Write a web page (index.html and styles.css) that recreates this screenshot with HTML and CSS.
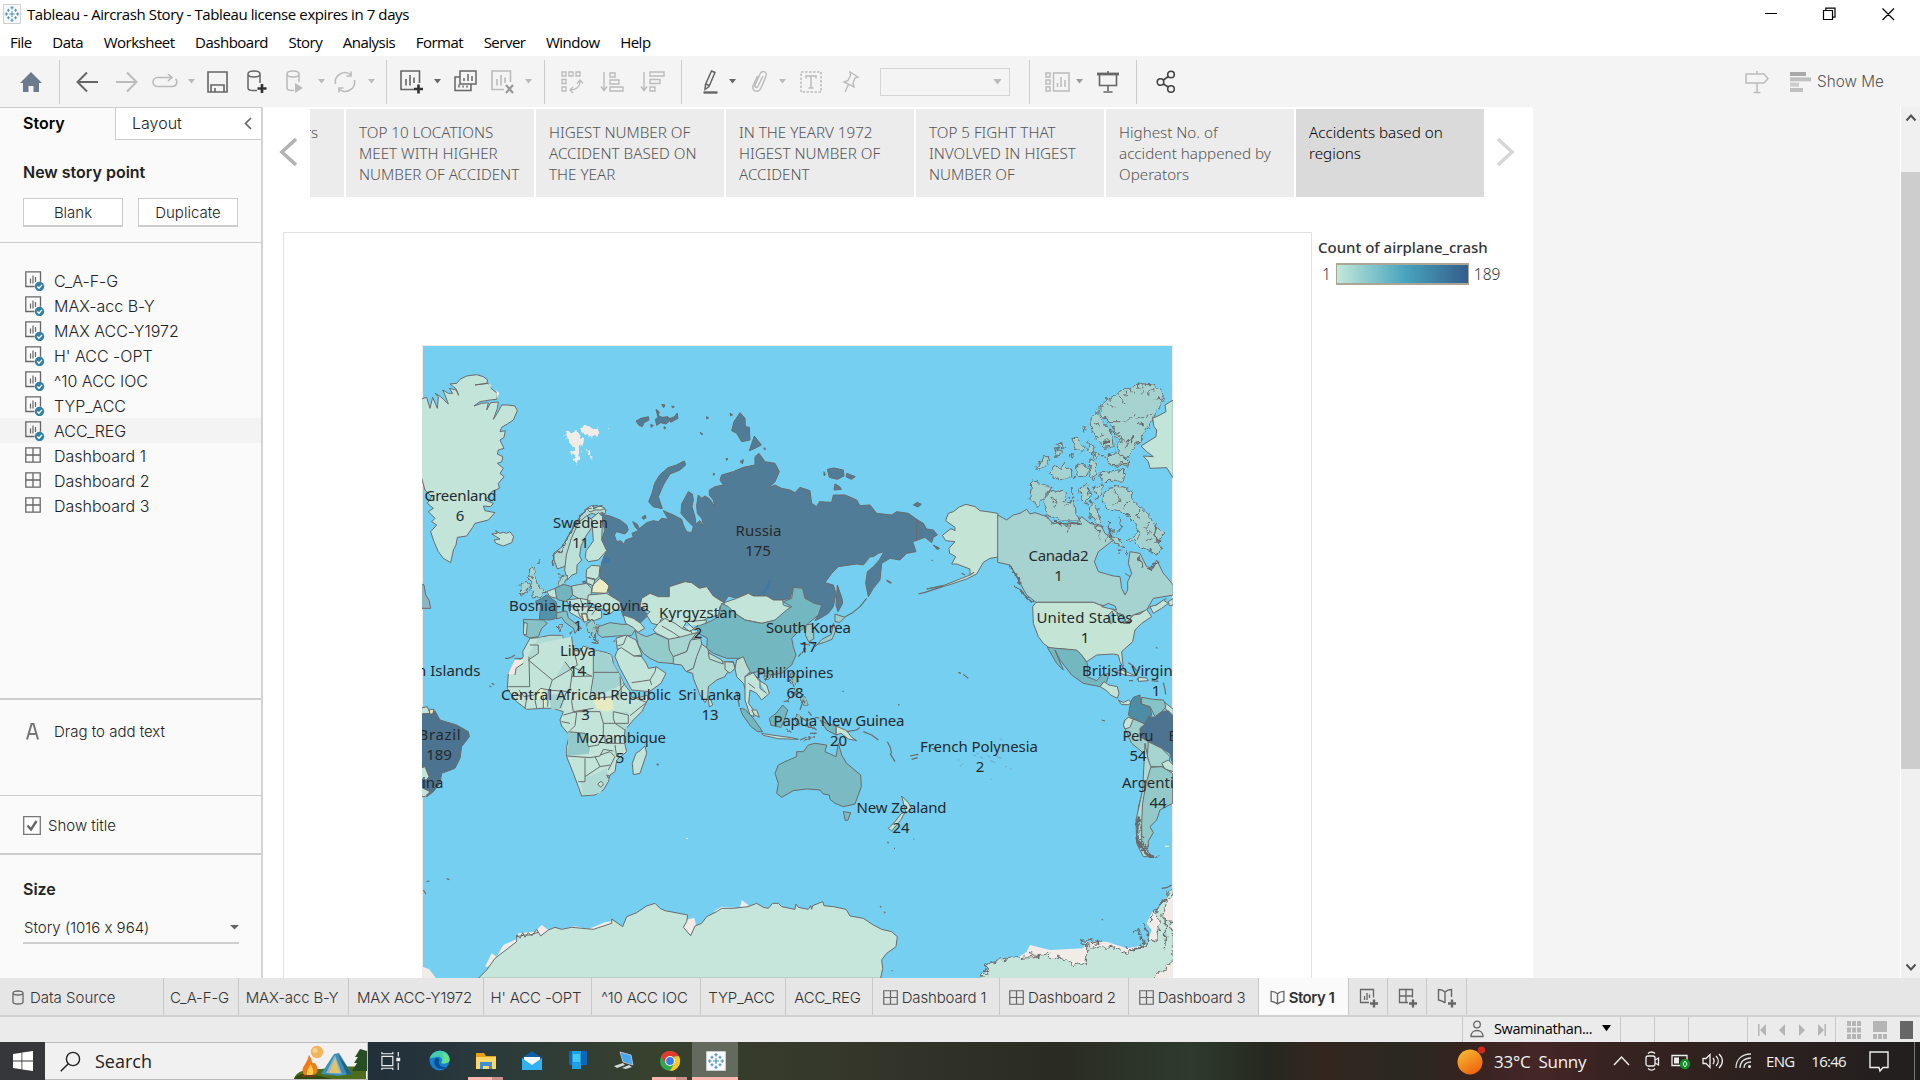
FILE: index.html
```html
<!DOCTYPE html>
<html lang="en">
<head>
<meta charset="utf-8">
<title>Tableau - Aircrash Story</title>
<link rel="stylesheet" href="styles.css">
</head>
<body>
<svg class="defs" width="0" height="0">
  <defs>
    <symbol id="sheet" viewBox="0 0 20 20"><path d="M9.500 15.500H.8V.8h14.700v10" fill="none" stroke="#666" stroke-width="1.300"/><path d="M5.500 12.500V7.500M8 12.500V4.500M10.500 11V6" stroke="#666" stroke-width="1.200"/><circle cx="14.500" cy="15.500" r="4.700" fill="#3380a3"/><path d="M12.300 15.500l1.700 1.700 3-3.300" fill="none" stroke="#fff" stroke-width="1.400"/></symbol>
    <symbol id="dash" viewBox="0 0 16 16"><path d="M.8.8h14.400v14.400H.8zM8 .8v14.400M.8 8h14.400" fill="none" stroke="#666" stroke-width="1.300"/></symbol>
    <symbol id="book" viewBox="0 0 16 16"><path d="M8 4C6 2 4 1.500 1.200 1.500v10.500C4 12.500 6 13 8 15c2-2 4-2.500 6.800-3V1.500C12 1.500 10 2 8 4zM8 4v11" fill="none" stroke="#666" stroke-width="1.400"/></symbol>
    <symbol id="caret" viewBox="0 0 7 5"><path d="M0 0h7L3.500 4.500z" fill="currentColor"/></symbol>
    <symbol id="tableau" viewBox="0 0 20 20"><path d="M.5.5h19v19H.5z" fill="#f7f8f9" stroke="#c9cdd1"/><path d="M10 7v6M7 10h6M10 2v3.500M8.300 3.700h3.400M10 14.500V18M8.300 16.300h3.400M2 10h3.500M3.700 8.300v3.400M14.500 10H18M16.300 8.300v3.400M6 4.700v3M4.500 6.200h3M14 4.700v3M12.500 6.200h3M6 12.300v3M4.500 13.800h3M14 12.300v3M12.500 13.800h3" stroke="#4a8fb5" stroke-width="1.100"/></symbol>
    <filter id="fjord" x="-5%" y="-5%" width="110%" height="110%"><feTurbulence type="fractalNoise" baseFrequency=".055" numOctaves="2" seed="4" result="n"/><feDisplacementMap in="SourceGraphic" in2="n" scale="26" xChannelSelector="R" yChannelSelector="G"/></filter>
  </defs>
</svg>

<header class="titlebar">
  <svg class="app-icon" width="18" height="20" viewBox="0 0 20 20" preserveAspectRatio="none"><use href="#tableau"/></svg>
  <span class="win-title">Tableau - Aircrash Story - Tableau license expires in 7 days</span>
  <svg class="win-buttons" width="132" height="16" viewBox="0 0 132 16" fill="none" stroke="#000" stroke-width="1.200"><path d="M0 7.500h12M58.500 4.500h9v9h-9zM60.800 4.500V2.200h9.200v9h-2.500M117.500 2.500l11.500 11.500M129 2.500l-11.500 11.500"/></svg>
</header>

<nav class="menubar">
  <span>File</span><span>Data</span><span>Worksheet</span><span>Dashboard</span><span>Story</span><span>Analysis</span><span>Format</span><span>Server</span><span>Window</span><span>Help</span>
</nav>

<div class="toolbar">
  <svg width="22" height="22" viewBox="0 0 22 22"><path d="M11 1L0 12h3v9h5.500v-6h5v6H19v-9h3z" fill="#6b7a8c"/></svg>
  <i class="sep"></i>
  <svg width="22" height="22" viewBox="0 0 22 22"><path d="M22 11H2M11 1.500L1.500 11l9.500 9.500" fill="none" stroke="#666" stroke-width="2"/></svg>
  <svg class="off" width="22" height="22" viewBox="0 0 22 22"><path d="M0 11h20M11 1.500l9.500 9.500L11 20.500" fill="none" stroke="currentColor" stroke-width="2"/></svg>
  <svg class="off" width="26" height="22" viewBox="0 0 26 22"><path d="M19 6.500H5.500a4.500 4.500 0 000 9h15a4.500 4.500 0 003-7.700M16 3l4 3.500-4 3.500" fill="none" stroke="currentColor" stroke-width="1.600"/></svg>
  <svg class="off" width="7" height="5"><use href="#caret"/></svg>
  <svg width="21" height="22" viewBox="0 0 21 22"><path d="M1 1h19v20H1zM4 21v-7h13v7M8 21v-4" fill="none" stroke="#666" stroke-width="1.600"/></svg>
  <svg width="20" height="24" viewBox="0 0 20 24"><path d="M10 20.500H6c-3 0-5-1-5-2.500V4c0-1.700 2.500-3 6-3s6 1.300 6 3v9M1 4c0 1.700 2.500 3 6 3s6-1.300 6-3" fill="none" stroke="#666" stroke-width="1.500"/><path d="M15 14v9M10.500 18.500h9" stroke="#333" stroke-width="2.600"/></svg>
  <svg class="off" width="18" height="24" viewBox="0 0 18 24"><path d="M8 20.500H6c-3 0-5-1-5-2.500V4c0-1.700 2.500-3 6-3s6 1.300 6 3v8M1 4c0 1.700 2.500 3 6 3s6-1.300 6-3" fill="none" stroke="currentColor" stroke-width="1.500"/><path d="M9 13l8 5-8 5z" fill="currentColor"/></svg>
  <svg class="off" width="7" height="5"><use href="#caret"/></svg>
  <svg class="off" width="22" height="22" viewBox="0 0 22 22"><path d="M1.500 13A9.500 9.500 0 0117 4M20.500 9A9.500 9.500 0 015 18M17 .5V5h-4.500M5 21.500V17h4.500" fill="none" stroke="currentColor" stroke-width="1.600"/></svg>
  <svg class="off" width="7" height="5"><use href="#caret"/></svg>
  <i class="sep"></i>
  <svg width="24" height="24" viewBox="0 0 24 24"><path d="M14 19.500H1V1h18.500v12" fill="none" stroke="#666" stroke-width="1.600"/><path d="M6 15.500V9M10 15.500V5M14 13V7.500" stroke="#666" stroke-width="1.600"/><path d="M18.500 14.500v9M14 19h9" stroke="#333" stroke-width="2.600"/></svg>
  <svg width="7" height="5"><use href="#caret"/></svg>
  <svg width="23" height="24" viewBox="0 0 23 24"><path d="M6 1h16v13H6zM6 7H1v13.500h16V14M10 11V8M14 11V4M18 11V6M5 17.500v-3M9 17.500v-2M13 17.500v-2" fill="none" stroke="#666" stroke-width="1.500"/></svg>
  <svg class="off" width="24" height="24" viewBox="0 0 24 24"><path d="M13 19.500H1V1h18.500v11" fill="none" stroke="currentColor" stroke-width="1.600"/><path d="M6 15.500V9M10 15.500V5M14 13V7.500" stroke="currentColor" stroke-width="1.600"/><path d="M15 15l7 8M22 15l-7 8" stroke="#999" stroke-width="2.200"/></svg>
  <svg class="off" width="7" height="5"><use href="#caret"/></svg>
  <i class="sep"></i>
  <svg class="off" width="22" height="22" viewBox="0 0 22 22" fill="none" stroke="currentColor" stroke-width="1.300"><path d="M1 1h4v4H1zM8 1h4v4H8zM15 1h4v4h-4zM1 8.500h4v4H1zM1 16h4v4H1zM9 19c6 0 10-3 10-9M16 12.500l3-3.500 3 3.500M12 16l-3 3 3 3"/></svg>
  <svg class="off" width="23" height="22" viewBox="0 0 23 22" fill="none" stroke="currentColor" stroke-width="1.400"><path d="M3 1v17M0 15.500l3 4 3-4M9 2h5v4H9zM9 9h9v4H9zM9 16h13v4H9z"/></svg>
  <svg class="off" width="24" height="22" viewBox="0 0 24 22" fill="none" stroke="currentColor" stroke-width="1.400"><path d="M3 1v17M0 15.500l3 4 3-4M9 1h14v4H9zM9 8.500h10v4H9zM9 16h5v4H9z"/></svg>
  <i class="sep"></i>
  <svg width="18" height="24" viewBox="0 0 18 24" fill="none" stroke="#666"><path d="M9.500 1l3.500 1.500-6 14-4 3 .5-5zM4 14l4 2" stroke-width="1.500"/><path d="M1.500 22.500h14" stroke-width="2.400"/></svg>
  <svg width="7" height="5"><use href="#caret"/></svg>
  <svg class="off" width="18" height="23" viewBox="0 0 18 23" fill="none" stroke="currentColor" stroke-width="1.400"><path d="M12 6l-5 10c-1 2.500-4 1.500-3-1L9 4c1.500-4 7.500-3 6 2L10 18c-2 5-9.500 4-8-2L6.500 6"/></svg>
  <svg class="off" width="7" height="5"><use href="#caret"/></svg>
  <svg class="off" width="22" height="22" viewBox="0 0 22 22" fill="none" stroke="currentColor"><path d="M1 1h20v20H1z" stroke-width="1.500" stroke-dasharray="2.500 1.500"/><path d="M6 7.500V5h10v2.500M11 5v12M8.500 17h5" stroke-width="1.500"/></svg>
  <svg class="off" width="17" height="22" viewBox="0 0 17 22" fill="none" stroke="currentColor" stroke-width="1.400"><path d="M8 1l8 5-3 1-2 5 1 4-10-5 4-1.500 2.500-5zM6.500 13.500L3 21"/></svg>
  <span class="fit-select"><svg class="off" width="9" height="6" viewBox="0 0 7 5"><use href="#caret"/></svg></span>
  <i class="sep"></i>
  <svg class="off" width="25" height="22" viewBox="0 0 25 22" fill="none" stroke="currentColor" stroke-width="1.500"><path d="M1 2h4v4H1zM1 9h4v4H1zM1 16h4v4H1zM8.500 2H24v18H8.500zM12.500 16v-4M16 16V6M20 16V9"/></svg>
  <svg class="off2" width="7" height="5"><use href="#caret"/></svg>
  <svg width="22" height="24" viewBox="0 0 22 24" fill="none" stroke="#666"><path d="M0 4h22" stroke-width="2.800"/><path d="M2.500 4v11.500h17V4M11 1v2M11 16v5M6.500 22h9" stroke-width="1.600"/></svg>
  <i class="sep"></i>
  <svg width="20" height="24" viewBox="0 0 20 24" fill="none" stroke="#444" stroke-width="1.600"><circle cx="4.500" cy="12" r="3.300"/><circle cx="15" cy="4.500" r="3.300"/><circle cx="15" cy="19" r="3.300"/><path d="M7.300 10l5-3.500M7.300 14l5 3"/></svg>
  <svg class="off" width="24" height="24" viewBox="0 0 24 24" fill="none" stroke="currentColor" stroke-width="1.500"><path d="M1 4h18l4 4.500-4 4.500H1zM12 1v3M12 13v9M8.500 22.500h7"/></svg>
  <svg width="21" height="20" viewBox="0 0 21 20"><path d="M0 0h16v4H0z" fill="#aaa"/><path d="M0 5.300h21v4H0z" fill="#c0c0c0"/><path d="M0 10.600h9v4H0z" fill="#ccc"/><path d="M0 16h13v4H0z" fill="#c0c0c0"/></svg>
  <span class="show-me">Show Me</span>
</div>

<main class="workspace">
  <aside class="pane">
    <div class="pane-tabs"><b>Story</b><span>Layout<svg width="8" height="13" viewBox="0 0 8 13"><path d="M7 1L1.500 6.500 7 12" fill="none" stroke="#666" stroke-width="1.700"/></svg></span></div>
    <section class="new-point"><h2>New story point</h2><div class="btns"><button>Blank</button><button>Duplicate</button></div></section>
    <ul class="sheets">
      <li><svg width="20" height="20"><use href="#sheet"/></svg>C_A-F-G</li>
      <li><svg width="20" height="20"><use href="#sheet"/></svg>MAX-acc B-Y</li>
      <li><svg width="20" height="20"><use href="#sheet"/></svg>MAX ACC-Y1972</li>
      <li><svg width="20" height="20"><use href="#sheet"/></svg>H' ACC -OPT</li>
      <li><svg width="20" height="20"><use href="#sheet"/></svg>^10 ACC IOC</li>
      <li><svg width="20" height="20"><use href="#sheet"/></svg>TYP_ACC</li>
      <li class="hover"><svg width="20" height="20"><use href="#sheet"/></svg>ACC_REG</li>
      <li><svg class="d" width="16" height="16"><use href="#dash"/></svg>Dashboard 1</li>
      <li><svg class="d" width="16" height="16"><use href="#dash"/></svg>Dashboard 2</li>
      <li><svg class="d" width="16" height="16"><use href="#dash"/></svg>Dashboard 3</li>
    </ul>
    <section class="drag"><svg width="13" height="17" viewBox="0 0 13 17"><path d="M1 16.500L5.500 1h2L12 16.500M3 11h7" fill="none" stroke="#777" stroke-width="2"/></svg>Drag to add text</section>
    <section class="title-opt"><svg width="18" height="19" viewBox="0 0 18 19"><path d="M.7.700h16.600v17.600H.7z" fill="#fff" stroke="#777" stroke-width="1.300"/><path d="M4.500 9.500L8 13.500 13.500 5" fill="none" stroke="#666" stroke-width="2.400"/></svg>Show title</section>
    <section class="size"><h2>Size</h2><div class="size-select">Story (1016 x 964)<svg width="9" height="5" viewBox="0 0 7 5" preserveAspectRatio="none"><use href="#caret"/></svg></div></section>
  </aside>

  <div class="story">
    <div class="navigator">
      <svg class="arrow" width="47" height="30" viewBox="0 0 47 30"><path d="M33 2L19 15l14 13" fill="none" stroke="#b3b3b3" stroke-width="3.600"/></svg>
      <div class="points">
        <div class="point cut">rs</div>
        <div class="point">TOP 10 LOCATIONS<br>MEET WITH HIGHER<br>NUMBER OF ACCIDENT</div>
        <div class="point">HIGEST NUMBER OF<br>ACCIDENT BASED ON<br>THE YEAR</div>
        <div class="point">IN THE YEARV 1972<br>HIGEST NUMBER OF<br>ACCIDENT</div>
        <div class="point">TOP 5 FIGHT THAT<br>INVOLVED IN HIGEST<br>NUMBER OF</div>
        <div class="point">Highest No. of<br>accident happened by<br>Operators</div>
        <div class="point current">Accidents based on<br>regions</div>
      </div>
      <svg class="arrow" width="47" height="30" viewBox="0 0 47 30"><path d="M14 2l14 13-14 13" fill="none" stroke="#d6d6d6" stroke-width="3.600"/></svg>
    </div>
    <div class="view">
      <div class="frame">
        <svg class="map" width="751" height="633" viewBox="422 345 751 633">
          <path d="M422 345h751v633H422z" fill="#f1ece6"/>
          <path d="M423 346h749v632H423z" fill="#74cff1"/>

          <!-- north-west sheet of the map -->
          <g class="land" transform="translate(420 340) scale(.33333)">
            <path d="M0 178L20 172 30 205 38 172 52 205 55 170 45 160 62 170 85 192 75 165 68 150 85 160 98 160 88 145 108 150 116 166 108 146 90 132 110 130 120 118 140 108 170 104 190 110 203 120 200 130 165 135 205 130 213 145 232 160 230 178 210 180 180 185 162 198 185 190 205 188 200 210 212 188 235 186 232 205 220 238 232 220 245 195 262 195 285 198 292 212 280 240 262 252 245 262 240 275 256 272 252 292 240 300 252 325 235 330 232 342 248 350 246 365 232 370 250 385 240 400 252 410 235 430 238 445 215 455 205 470 195 480 220 490 212 500 190 498 195 512 225 518 205 540 165 550 158 562 140 588 112 592 108 615 100 630 92 668 70 655 55 635 42 605 32 575 50 555 35 545 45 535 25 515 40 505 22 490 35 470 15 450 5 415 0 400z"/>
            <path d="M215 582l17-2-5-8 12 8 12-3 8 3 11-5 11 15-6 18-25 10-22-8-6-10 18-3z"/>
            <path d="M0 730l12 5 5 30 10 15 5 25-32 0z" fill="#8fb5c4"/>
            <path filter="url(#fjord)" class="bare" d="M435 278l20 2 13-8 12 13 12 20-12 25-2 20-10 23-8-23-8-8 10-17-18-15zM484 258l11-2 15 6 22 3-2 20-15 8-15-8-14-10zM497 318l18 27-5 5-10-15zM568 261h4v3h-4z"/>
            <path class="bare" d="M205 130l8 5-2 10zM230 150l8 10-8 18z"/>
            <g class="rus">
              <path d="M960 218l15 17 1 25 12 2 2 38-25 5-15-25-15-8 7-27zM1003 288l21 27-19 10-17 7zM793 363l4 12-17 15-30 12-20 33-15 35 12 36-28-6-13-15 10-25 8-30 15-25 25-22 25-8zM648 243l15-8 22-5 2 10-15 8-5 12-10-4zM708 208l10 8-4 10 12 6 18-2 8 10-14 12-16-4-12 8-4-18 8-6zM750 235l12-4 10-12 2 16-22 12zM725 193l10 2-4 8zM755 198l8 2-5 4zM692 254l8 2-6 6zM732 260l6 4-5 3zM860 230l6 4-6 3zM840 277l8 5-2 3zM930 220l8 4-6 4zM1032 323l5 4-4 2zM666 532l10-6 2 8-8 4zM488 725l14-3 8 10-18 2zM960 365l10-6-2 12zM880 400l5 2-5 4zM918 355l6 2-4 4z"/>
              <path d="M1222 388l20-4 28 6 2 18-20 10-24-6zM1280 400l26 10-12 8-16-8zM1245 432l14 8 5 8-22 2zM1480 495l12-8 12 6-10 8zM1540 615l18 10-6 4zM1400 720l14 8-4 2zM1212 395l4 10-4 2z"/>
              <path d="M545 520L555 525 570 528 600 540 620 555 625 570 615 582 590 575 583 585 590 605 602 602 612 613 617 600 640 592 636 580 655 572 645 560 638 545 652 553 658 566 680 548 700 542 715 545 725 535 745 538 730 512 760 525 785 538 790 555 800 575 815 578 820 560 800 540 783 520 785 492 805 455 817 462 820 480 816 500 825 530 828 552 840 542 852 560 845 535 832 520 830 495 835 465 845 475 855 468 870 478 885 500 880 480 868 465 868 450 885 440 910 435 900 420 905 405 940 395 970 382 1005 375 1005 350 1017 340 1035 365 1065 370 1078 395 1065 425 1045 445 1065 435 1085 445 1110 450 1125 458 1140 442 1170 452 1175 490 1190 500 1198 485 1235 487 1240 465 1275 465 1310 480 1320 497 1350 495 1370 520 1415 525 1430 515 1465 520 1490 538 1510 550 1520 567 1540 570 1552 585 1540 592 1535 608 1515 592 1493 600 1478 605 1488 635 1460 640 1440 660 1410 655 1385 670 1380 720 1360 745 1345 770 1337 730 1342 695 1360 680 1378 660 1392 635 1375 640 1360 650 1350 650 1330 675 1310 672 1255 680 1235 700 1215 728 1240 735 1248 760 1240 800 1225 820 1200 835 1185 842 1195 825 1205 795 1183 790 1155 775 1148 745 1120 742 1110 775 1088 780 1060 780 1040 768 1000 768 985 760 950 775 925 768 912 788 880 768 860 740 838 745 815 728 795 725 748 740 748 770 715 770 690 760 665 775 660 800 685 825 660 850 640 835 610 830 600 800 580 780 565 755 565 735 538 710 545 665 560 632 545 600 555 570 545 545zM1252 735l14 40 2 15-14 25-6-20z"/>
            </g>
            <path d="M1052 720l-3 20-18 22-15 3 20-20 10-25z" fill="#3d78a8" stroke="none"/><path d="M550 650l20 5-2 15-16-3z" fill="#3d78a8" stroke="none"/>
            <path d="M1490 537v65"/>
            <path fill="#b3dad5" d="M540 500l18 10-3 12-10-5-12 8-18-5-15 8-15 22-18 40-14 32-5 35-14 22-22 8-10-28 0-20 24-18 25-45 25-40 25-30z"/>
            <path fill="#bce1d8" d="M500 528l15 10 0 25-17 25-15 30-4 30 6 12-14 15-1 25-14 5-14 15-8-30 5-45 15-50 22-48z"/>
            <path d="M515 535l20-17 13 12-3 70 15 32-25 28-30 5-9-12 2-20 22-30-2-30z"/>
            <path d="M500 505l15-8 10 8 15-8 15 8-12 5-18 0-15 6z"/>
            <path filter="url(#fjord)" stroke-width="5" d="M398 675l5-25 22-20 22-42 22-42 18-25 20-18 22-6 25 5"/>
            <path filter="url(#fjord)" d="M330 690l10-8 10 3-8 15 3 12 17 33 13 10-7 13-33 7-5-6 13-10-6-12-10-5 5-15zM303 735l12-8 10 3 0 25-20 8zM350 668l8-12 2 6zM322 705l8-15 4 20-8 6zM418 715l8-15 10 8-2 22-10 8-8-10z" fill="#a9d5d1"/>
            <path fill="#5193a8" d="M345 785l20-10 15-10 30 22 0 48-20 5-32-2 4-43z"/>
            <path fill="#73b5bf" d="M405 745l25-12 25 7 3 25-18 20-25-5-10-15z"/>
            <path fill="#b3dad5" d="M455 738l45-8 15 15-3 35-28 0-26-15z"/>
            <path fill="#e8edc4" d="M518 735l22-20 12 8 15 15-7 22-45-2z"/>
            <path d="M505 765l55-5 40 25 5 25-20 0-15 12-15-10-15-8-38-20zM500 688l15-12 25 2-3 32-12 10-27-8zM500 712l25 5-5 20-20-8zM380 755l25-10 5 30-20-5zM440 780l40-5 25 5-5 20-30 0-25-8zM445 800l60 0 25 5 15 8 0 20-25 10-35-5-35-20z"/>
            <path d="M480 775l10 25M510 780l-8 40M470 800l10 30 30 10M530 805l-15 20"/>
            <path fill="#85c1c5" d="M310 838l60 2 12 10-17 15-10 25-25 4-18-9zM410 818l30-5 5 20 40 32-12 3-8 12-5-15-25-18-10-15-15 5z"/>
            <path d="M312 848l10 2-3 35-9-2zM484 820l16 0 5 20-15 5z"/><path fill="#e8edc4" d="M485 822l14 0 4 20-10 5z"/>
            <path filter="url(#fjord)" d="M500 850l22-8 10 15-8 10 10 8-10 12 6 15-18-12-10-25zM415 855l8-2 2 18-8 2zM445 880l15-2-3 8zM518 908l15-2-6 5zM575 902l12-5-5 8zM508 878l6 8-6 4zM524 888l8 6-4 6z" fill="#93c9ca"/>
            <path fill="#8fc8c8" d="M535 860l35-12 35 5 30 0 12 15-12 18-45 2-45 4-12-10z"/>
            <path d="M610 825l30 10 22 15 12 15-20 12-15-15-22-12z"/>
            <path d="M665 775l25-15 25 10 33 0 0-30 47-15 20 3 23 17 22-5 20 28 32 20-12 12-5 25-35 10-20 15-40-5-15 25-35-25-25-10-10 20-20-5-15-25 10-10-30-15z"/>
            <path d="M715 850l20-15 30 15 25 18 25 7 20 5-10 15-30-5-10 10-35 0-40-20-10-10z"/><path d="M725 858l35 20 25 18M790 860l20 15 25-20M800 845l60-5-5 20-30 10zM810 870l10 15 15-10"/>
            <path fill="#93caca" d="M645 872l15 10 20 8 25-10 40 18 15 32 15 42-60-5-25-12-20-15-15-25z"/>
            <path fill="#a6d4d1" d="M745 898l40-8 45-12-20 27-10 30-40 15-12-20z"/>
            <path fill="#b0dad4" d="M760 950l40-15 12-35 30-5 5 25-15 30-12 35-22 10-13-20-25-3z"/>
            <path d="M912 788l38-13 35-15 15 8 40 0 20 12 28 0 2 15 23 8-18 17-35 25-35 5-50-10-30-20-30-20z"/>
            <path fill="#73b7c0" d="M1120 742l28 3 7 30 28 15 22 5-10 30-30 25-20 20-15 10-15 15 5 25 8 25-13 30-30 25-35 5-35-10-30 5-10-25-15-20-40 0-40-15-20-15 2-30-27-15-5-20 40-15 25-15 10-40 20 10 20 20 30 20 50 10 40-10 35-30 15-10-25-15 25-10z"/>
            <path fill="#b0dad4" d="M845 912l17 13 8 20 40 20 30 0 5 20-25 15-5 10-25 10-25 20-2 35-8 13-15-23-20-50-2-15-18-5 20-10 10-35z"/>
            <path d="M865 938l40 22 5 12-42-15zM915 965l25 2 5 18-15 15-15-12zM950 960l20-10 10 25 10 20-15 15 12 40-5 15-12-35-20-20-5-25z" fill="#b9ded6"/>
            <path d="M975 1010l25-12 15 22 25 15 8 25-23 20-15-20-20-10-2 20-2 20 14 20 2 20-12-5-15-45zM1000 1000l20 20 0 25 20 15M985 1030l20 15"/>
          </g>

          <!-- Africa, Arabia and Brazil's western copy -->
          <g class="land" transform="translate(420 640) scale(.33333)">
            <path d="M330-5L355-7 390-14 428-14 430 8 445 15 460 32 482 33 490 18 522 30 560 38 575 45 580 72 600 105 612 132 630 155 636 172 660 172 683 165 683 180 665 215 640 240 615 270 612 300 620 335 590 360 585 395 570 405 565 425 550 450 525 465 485 468 475 440 460 400 440 350 440 320 448 285 425 258 420 240 430 215 415 210 395 205 370 205 320 208 290 185 275 165 262 145 265 100 285 72 310 50 308 35z"/>
            <g stroke="none">
              <path fill="#f3e8e2" d="M264 102l20-42 25 0-2 12-15 8-5 22z"/>
              <path fill="#a3d3d0" d="M522 30l53 15-5 10 25 42-75 0zM520 97l75 0 15 30-10 45-40 0-45 0zM385 165l55-5-15 45-30 5z"/>
              <path fill="#b0dad4" d="M355-7l72-6 8 80 20 20-58 32-72-62 0-12zM580 215l45 0-5 55-35-20zM480 420l50-20 30-15 5 35-25 40-50 5z"/>
              <path fill="#e6ebc0" d="M518 178l57-6 6 35-20 8-30-8zM340 158l25-15 15 25-30 12zM368 180l8 0 2 18-8 2z"/>
              <path fill="#93cac9" d="M443 275l52 5 15 40-5 32-64-5 4-30z"/>
            </g>
            <path d="M308 55h-25M327 50l2 90-64 0M310 70l-22 15-3 20M330 15l25 0 0 25-30 20 72 60 60-35 15-10-15-65-2-20M397 120l-10 30-25-5-20 20-30 5-15-20M457 80l60 30M520 30v80l-10 60M520 97h75M435 65l22 30-8 60-65-5M440 155l-20 50M385 150l-2 50M370 170l0 35M345 180l5 25M320 175l-5 30M285 160l20 10M455 110l60-2M460 155l-5 30 5 30 60-10M520 175l60-5 20-20 15-20M580 215l45 10 0 25-40 0-5-15zM640 172l40 15-50 40M430 225l30-8 10 0-5 40-15 15M425 245l25 5M470 215l70 0 10 35 0 35-15 30-30 5-10-40-50-5M550 250l35 0 30 20M555 285l0 25 60 0M440 348l70 5 30-5 10-20 30 5M495 355l0 70-20 0M525 350l15 30-45 30M540 380l30-5M540 345l30-10 15 15-20 40M585 315l5 35M600 110l5 60"/>
            <path d="M533 432l10-8 8 8-9 10zM560 405l8 2-3 8z"/>
            <path d="M675 318l5 22-20 60-20 4-3-34 11-30 12-8zM865 178l8 2 5 15-10 6zM711 372h4v3h-4z"/>
            <path d="M590 35l12-15 38 25 25 5 15 22 5 13 25-4 28 19-15 30-35 25-53-5-35-65-15-35z"/><path d="M635 128l55-8 15-25 3-15M602 20l40 28 25 0M690 120l5 15"/>
            <path d="M588-5l30-10 30 15 18 45-24 3-38-25-12 5z"/><path d="M620-12l-10 25-18 5"/>
            <path fill="#4c7390" d="M0 218L45 213 60 240 110 255 145 275 148 290 125 320 120 355 105 385 65 400 60 430 40 455 20 470 0 440z"/>
            <path d="M0 205l22-5 8 20-30 2zM0 385l15-5 12 30-8 10-19-5zM0 440l30 15-15 15-15 0z"/><path fill="#e6ebc0" d="M28 208l14 0-4 14-8 0z"/>
            <path fill="#73b7c0" d="M960 205l15 3 25 27 28 40-15 0-20-15-25-35zM1048 235l20-15 20-25 15 15-10 30-10 22-30-6z"/>
            <path d="M1025 280l30 5 60 8 20 5-60-2-45-10zM995 210l15 0 8 22-15-8z"/>
            <path filter="url(#fjord)" d="M1108 120l10-25 12 10 5 20-15 20zM1140 170l15-10 4 36-14-4zM1095 185l10-15-2 15zM1150 300l40-15-5 8zM1125 235l10-15 10 20-12 15zM1035 105l14 0-2 15-10 2zM1120 150l8 14-6 6zM1165 262l20-4-6 6zM1100 270l14 4-8 4z" fill="#85c1c5"/>
            <path class="isl" d="M215 130l8 4M208 138l6 3M255 55l10 0 10-4 10-6M20 725l8-2M80 716l8 3M10 750l8 12M950 155l4 20 4 25"/>
            <path class="bare" d="M8 980l20 8 20 27-40 0zM798 594h6v3h-6z"/>
          </g>

          <!-- North America -->
          <g class="land" transform="translate(780 340) scale(.33333)">
            <path fill="#c4e5d5" d="M653 520l-18-3-35-5-15-12-27-7-20 8-18 14-15 5-8 22 28 20 0 10-12-6-26 20 10 16 28 3-18 20 2 15 18 10-12 22 15 0 40 15 0 18-25 10-50 20-55 12 60-10 60-20 30-15 20-35 20-12 30-5 23 9z"/>
            <g fill="#a6d3d0">
              <path d="M653 525L680 540 700 525 720 520 740 508 750 522 765 518 800 530 820 552 840 545 860 560 865 545 890 550 905 530 930 550 965 560 975 580 1000 600 975 620 955 635 943 665 955 695 1000 708 1020 710 1025 745 1035 765 1043 750 1043 725 1055 700 1045 670 1050 635 1080 640 1100 680 1120 685 1130 660 1150 700 1180 735 1180 765 1140 772 1120 775 1100 810 1060 825 1040 850 1030 825 1015 820 985 800 960 795 940 787 768 787 740 765 715 720 690 675 653 667z"/>
              <g filter="url(#fjord)">
                <path d="M960 205l15-22 25-13 12-8 20-15 25-5 25-12 35 5 25 12 11 18-18 40-20 40-30 40-20 35-25 35-30-15 5-30-10-40-20-30-25-20zM950 215l15 22 20 25 10 30 5 28-25 5-25-30-15-25-2-30 8-15zM985 345l30-5 30 20 0 15-40 3-20-10zM965 395l30-3 40 3-5 28-60 2-10-18zM775 375l15-25 20 0-10 25-15 15-18-5zM805 395l20-15 15 5 10-18 10 18 15 5 0 15-30 15-20-5-18-12zM875 292l12 0 28 35-10 12-20-15zM890 375l20-8 18 25-15 20-22-10zM930 355l15 10 10 40-20 15-8-30zM830 312l18-3 5 12-18 3zM825 330l20-2 2 15-15 5zM920 308l15 5 10 25-20-10zM909 262l8 5-5 10zM750 475l5-50 30 5 25 12-15 28-25 25zM795 460l30-10 35 10-5 25 20 0 0-40 8 35 5 40 8 20-50 0-45-10-10-30zM895 450l15-10 12 0 8 30-8 20-20-15zM940 440l30-5-10 30-10 10zM935 485l15 20 15 55-15-10-20-30zM872 340l8 12-4 6zM965 345l10 4-6 8zM940 340l14 6-8 8zM880 403l6 6-6 4z"/>
                <path d="M975 460L985 445 1020 440 1055 450 1055 475 1080 500 1110 530 1125 560 1150 575 1150 590 1130 600 1140 620 1130 648 1100 630 1075 615 1045 598 1075 575 1050 530 1020 515 985 510 972 485zM995 590l18 5 18 25-25-5zM1015 628l8 4-6 6zM1040 632l6 10-6 4z"/>
                <path d="M1020 170l15 20M1035 155l5 15M1050 140l10 25M1072 130l2 18M1090 135l-5 25M1120 150l-15 15M1145 175l-18 2M1060 220l-20 25-60 0M1115 225l-50 10M1095 255l-25-5M990 270l25 10 10 30M1060 290l-20 15-20-15M1000 335l-15 15M1050 300l-15 30M990 375l50-5M985 190l15 12M945 250l15 8M950 290l20-5M810 470l20 10-10 20M850 500l25-10M1000 450l20 30-20 15M1050 480l-20 20M1080 510l-15 15 20 10M1110 550l-20 10 20 20M1120 600l-25-5"/>
                <path stroke-width="7" d="M820 548l40 8 40-6M1130 550l-10 30 20 30M1065 290l-10 20M985 300l-10 15M985 555l10 20-5 25"/>
                <path d="M930 550l25 20 5 30M985 540l10 30-20 30M1020 530l5 30-15 20M870 550l-5 25M925 520l20 25 30 15M1060 560l20 25-10 15"/>
              </g>
            </g>
            <path d="M1035 700l15 10M1160 775l-40 25-15 5"/>
            <path filter="url(#fjord)" stroke-width="6" d="M685 675l20 25 15 25M705 735l25 25 30 30M1085 680l-10-30M1110 690l20-25"/>
            <path d="M1180 180L1155 195 1158 215 1140 225 1118 235 1122 260 1130 270 1128 290 1083 318 1100 335 1120 350 1090 348 1105 365 1110 385 1160 383 1180 415z"/>
            <path fill="#c4e5d5" d="M768 787L940 787 960 795 985 800 1015 820 1040 850 1060 825 1080 822 1100 808 1115 830 1085 850 1065 870 1058 905 1025 935 1030 985 1020 965 1015 945 1000 942 950 945 920 965 895 935 860 928 810 925 790 910 775 890 760 850 758 800z"/>
            <path fill="#74cff1" d="M965 800l20-10 20 8 5 12-25-5zM985 825l12-12 5 30-10 8zM1010 820l20 5 5 15-12 10zM1030 850l25-8-5 8z"/>
            <path d="M1110 800l20-5 20-15 15 10-20 15-25 15zM1165 785l15-10 0 20-12 2z"/>
            <path d="M165 822l15 5 15 5-15 15-15-2zM160 850l8 20-12 28-20 8-25 8-5 6 20-22 28-15zM78 855l18-3 5 20 0 25-15 8-10-20z" fill="#9bcfcc"/>
            <path class="isl" d="M195 830l20-10 25-20 20-25M415 762l20-5 25-8 30-10M545 700l10 5M470 620l8 6M570 705l12-8M1130 923l2 2M55 950l8-10M455 660l3 2M320 722l12 6M90 905l12 8M70 925l6 14"/>
          </g>

          <!-- Oceania and South America -->
          <g class="land" transform="translate(800 640) scale(.33333)">
            <path fill="#79bac3" d="M-65 375L-45 365-10 350-10 335 10 335 25 315 45 310 80 315 75 335 108 350 115 310 125 345 140 370 182 405 184 440 165 492 130 500 105 490 90 478 88 465 70 462 60 450 20 447-20 452-55 472-70 460-65 430-75 400z"/>
            <path fill="#79bac3" d="M130 515l22 3-8 22-8 2z"/>
            <path d="M305 468l20 20 10 17-17 15-5-20zM315 518l-15 25-25 30-10-8 20-20 20-25zM108 258l32 14 15 20 15 10-25-5-22-17-15 5z"/>
            <path fill="#73b7c0" d="M60 240l20 10 28 8 0 27-28-15z"/>
            <path class="isl" d="M140 275l30-5 10-8M190 275l25 10 20 15M262 305l8 15 5 20M270 340l15 25M330 348l25-5M335 358l18-5M475 97l8 3M490 103l15 12M128 153l3 2M295 192l3 4M905 240l10 3M0 300l20-8M30 280l20 0M0 230l20 12 15-5M240 798l4 4M252 815l4 4M262 606l4 3M282 625h3M340 597h3M395 325l15 3M0 210l10-30 5 10M5 40l12-15M0 10l30 5M987 122h12M1010 117l18 3M1055 122l20 2M1090 128l5 20 2 15M985 68l15 10 10 15M1068 22l2 2M25 215l10 12M45 232l14 2M10 255l14 4M40 262l10 8"/>
            <path stroke-width="2" opacity=".6" d="M475 360h3M485 372h4M520 345l8 3M540 350l10 5M560 345l12 8M570 362l15 6M590 350l15 5M600 295l6 6M615 380h5M630 387h4M572 418h3M610 330l8 5M530 340l6 2M480 378h4"/>
            <path fill="#73b7c0" d="M742 22L770 25 830 30 845 45 862 70 862 110 890 122 905 105 928 100 920 125 900 140 850 130 815 105 780 60 765 30 775 55 790 90 770 70z"/>
            <path d="M900 140l12-15 15 10 25 5 5 20-5 15-20-10-15-15zM955 180l15 8 15-8 10 8-10 6-20 0zM945 95l20-5 25 10 15 8-30-3zM1015 112l25 2 5 8-30 2z"/>
            <path fill="#4c8ca5" d="M992 185L1000 172 1020 165 1022 192 1050 200 1055 225 1035 252 1000 235 985 225z"/>
            <path fill="#86c3c4" d="M1025 172L1060 178 1090 180 1100 198 1085 215 1065 230 1050 200 1025 192z"/>
            <path d="M1095 188l25 20 0 20-15-3-8-20z"/>
            <path fill="#4c7390" d="M1035 250L1045 230 1065 232 1085 215 1105 212 1120 228 1120 380 1110 340 1085 325 1045 305 1020 290 1020 265z"/>
            <path fill="#9fd0cd" d="M975 240l10-8 15 5 35 15-15 13 0 25 25 15 0 30-5 12-45-37-20-45-5-10z"/>
            <path d="M975 240l10-8 15 5-10 25-15 5-5-12z"/>
            <path fill="#a6d4d1" d="M1045 305l40 20 25 25-2 15-23 15-35 0-8-30z"/>
            <path d="M1085 370l20-10 15 15 0 20-25-8z"/>
            <path fill="#93cac9" d="M1050 382l35-2 33 20 0 90-38 20-10 30-20 20 10 18-15 25 0 18-25 0-5-120 20-70z"/>
            <path fill="#b0dad4" d="M1035 310l10 50 8 20-15 50-10 60-3 60 0 60 30 40-25 0-20-40-2-70 20-90z"/>
            <g filter="url(#fjord)"><path stroke-width="10" d="M1018 530l-8 35 2 35 15 30 28 22"/><path stroke-width="5" stroke-dasharray="6 3" d="M1025 600l25 45 25 5M1018 620l30 10M1020 530l5 60"/></g>
            <path stroke="none" fill="#e6ebc0" d="M1095 617h12v4h-12z"/>
            <path class="isl" d="M1085 745l15-2 15-8M905 838l4 2M275 992h3"/>
          </g>

          <!-- Antarctica -->
          <g class="land ice" transform="translate(420 640) scale(.33333)">
            <path class="bare" d="M195 980l20-40 15 10 20-35 45-20 0-15 50-5 20-20 20 15 40-3 40-8 40 8 50-20 25-5-5 15 0 30-330 90zM803 838l20-4 6 25-18 25-20-20zM880 815l25-15 55 5 5-25 20 15-5 10z"/>
            <path class="bare" d="M1690 1015l10-25 60-15 60-40 10-20 60 15 100-5 10-20 60 0 60 20 60-10 15-45-15-20 20-40 20 20 20-60 20-15 16 20 0 20-12 60 0 100 16 20 0 50z"/>
            <path d="M175 1015L200 990 225 955 290 905 290 885 300 895 308 878 315 892 325 878 335 888 350 868 362 888 385 870 405 862 425 868 455 862 520 868 575 850 575 837 608 860 620 830 650 818 680 798 705 790 720 805 735 812 803 825 800 845 790 862 812 887 825 858 845 850 860 830 890 815 905 805 940 805 985 800 1010 790 1030 802 1045 805 1058 790 1075 790 1085 800 1125 808 1128 792 1135 802 1165 808 1172 797 1175 808 1178 797 1208 785 1212 797 1240 800 1278 808 1290 828 1330 835 1360 855 1385 868 1415 875 1432 890 1428 920 1400 940 1385 960 1388 985 1382 1015z"/>
            <g filter="url(#fjord)">
              <path d="M1680 1035l5-35 12 0 3-25 40-15 30-5 60-5 30 0 20-10 10 12 30 0 10 12 20-2 10 15 20-10 15 8 5-15 0-45 20 10 20-8 15 8 30-5 35 18 20-12 35-5 10-12 25-10 8-40-10-35 5-20 25-30 10-20 30-8 10 2-35 20-15 25-10 40 20 15 15 45 0 20-8 60-45 30-20 42z"/>
              <path fill="none" stroke-width="4" d="M1690 985l15 10M2140 880l15-20 15 50M2170 850l15 30 0 30-30 15M2190 850l10-35 20-25 25-15M1980 905l40-5 20 8-45 4zM1830 940l30 8M2110 920l20 10 30-6M2235 830l2 60-4 40"/>
            </g>
            <path fill="none" d="M290 890l25-5 15 0 25-8"/>
          </g>

          <g class="labels">
            <text x="460.500" y="501" textLength="72">Greenland</text><text x="460" y="521">6</text>
            <text x="580.500" y="528" textLength="55">Sweden</text><text x="580.500" y="548">11</text>
            <text x="758.500" y="536" textLength="46">Russia</text><text x="758" y="556">175</text>
            <text x="579" y="611" textLength="140">Bosnia-Herzegovina</text><text x="578" y="631">1</text>
            <text x="698" y="618" textLength="78">Kyrgyzstan</text><text x="698" y="638">2</text>
            <text x="808.500" y="633" textLength="85">South Korea</text><text x="808.500" y="652">17</text>
            <text x="578" y="656" textLength="36">Libya</text><text x="577.500" y="676">14</text>
            <text x="586" y="700" textLength="170">Central African Republic</text><text x="585.500" y="720">3</text>
            <text x="710" y="700" textLength="63">Sri Lanka</text><text x="710" y="720">13</text>
            <text x="795" y="678" textLength="77">Philippines</text><text x="795" y="698">68</text>
            <text x="621" y="743" textLength="90">Mozambique</text><text x="620" y="763">5</text>
            <text x="839" y="726" textLength="131">Papua New Guinea</text><text x="838.500" y="746">20</text>
            <text x="979" y="752" textLength="118">French Polynesia</text><text x="980" y="772">2</text>
            <text x="901.500" y="813" textLength="90">New Zealand</text><text x="901" y="833">24</text>
            <text x="1058.500" y="561" textLength="60">Canada2</text><text x="1058.500" y="581">1</text>
            <text x="1084.500" y="623" textLength="96">United States</text><text x="1085" y="643">1</text>
            <text class="s" x="1082" y="676">British Virgin Islands</text><text x="1156" y="696">1</text>
            <text x="1138" y="741" textLength="31">Peru</text><text x="1138" y="761">54</text>
            <text class="s" x="1168.500" y="741">Brazil</text>
            <text class="s" x="1122" y="788">Argentina</text><text x="1158" y="808">44</text>
            <text x="439.500" y="740" textLength="42">Brazil</text><text x="439" y="760">189</text>
            <text class="e" x="480.500" y="676">British Virgin Islands</text>
            <text class="e" x="443.500" y="788">Argentina</text>
          </g>
        </svg>
      </div>
      <div class="legend">
        <h3>Count of airplane_crash</h3>
        <div class="ramp"><span>1</span><i></i><span>189</span></div>
      </div>
    </div>
  </div>
  <div class="void"></div>
  <div class="scroll">
    <svg width="12" height="9" viewBox="0 0 12 9"><path d="M1.500 7.500L6 2.500l4.500 5" fill="none" stroke="#505050" stroke-width="2"/></svg>
    <i></i>
    <svg width="12" height="9" viewBox="0 0 12 9"><path d="M1.500 1.500L6 6.500l4.500-5" fill="none" stroke="#505050" stroke-width="2"/></svg>
  </div>
</main>

<div class="sheet-tabs">
  <span class="ds"><svg width="12" height="15" viewBox="0 0 12 15"><path d="M1 3v9c0 1.300 2 2 5 2s5-.7 5-2V3M1 3c0 1.300 2 2 5 2s5-.7 5-2-2-2-5-2-5 .7-5 2z" fill="none" stroke="#666" stroke-width="1.300"/></svg>Data Source</span>
  <span>C_A-F-G</span><span>MAX-acc B-Y</span><span>MAX ACC-Y1972</span><span>H' ACC -OPT</span><span>^10 ACC IOC</span><span>TYP_ACC</span><span>ACC_REG</span>
  <span><svg width="15" height="15" viewBox="0 0 16 16"><use href="#dash"/></svg>Dashboard 1</span>
  <span><svg width="15" height="15" viewBox="0 0 16 16"><use href="#dash"/></svg>Dashboard 2</span>
  <span><svg width="15" height="15" viewBox="0 0 16 16"><use href="#dash"/></svg>Dashboard 3</span>
  <span class="active"><svg width="15" height="15" viewBox="0 0 16 16"><use href="#book"/></svg>Story 1</span>
  <span class="add"><svg width="20" height="20" viewBox="0 0 20 20"><path d="M10 14.500H1.500V1.500h13v8M5.500 12V8M8 12V5M10.500 10V6.500" fill="none" stroke="#666" stroke-width="1.300"/><path d="M15 11.500v8M11 15.500h8" stroke="#666" stroke-width="2.400"/></svg></span>
  <span class="add"><svg width="20" height="20" viewBox="0 0 20 20"><path d="M10 14.500H1.500V1.500h13v8M8 1.500v13M1.500 8h13" fill="none" stroke="#666" stroke-width="1.300"/><path d="M15 11.500v8M11 15.500h8" stroke="#666" stroke-width="2.400"/></svg></span>
  <span class="add"><svg width="20" height="20" viewBox="0 0 20 20"><path d="M8 4C6 2 4 1.500 1.500 1.500v10.500C4 12.500 6 13 8 15M8 4c2-2 4-2.500 6.500-2.500V9M8 4v11" fill="none" stroke="#666" stroke-width="1.400"/><path d="M15 11.500v8M11 15.500h8" stroke="#666" stroke-width="2.400"/></svg></span>
</div>

<div class="status">
  <span class="user"><svg width="14" height="18" viewBox="0 0 14 18"><circle cx="7" cy="4.500" r="3.300" fill="none" stroke="#666" stroke-width="1.300"/><path d="M1 16.500c0-8 12-8 12 0z" fill="none" stroke="#666" stroke-width="1.300"/></svg>Swaminathan...<svg class="uc" width="9" height="7" viewBox="0 0 7 5" preserveAspectRatio="none"><use href="#caret"/></svg></span>
  <span></span><span></span><span></span>
  <span class="pager"><svg width="68" height="12" viewBox="0 0 68 12" fill="#b5b5b5"><path d="M0 0h1.500v12H0zM8 0v12L2 6zM27 0v12l-6-6zM41 0v12l6-6zM60 0v12l6-6zM66.500 0H68v12h-1.500z"/></svg></span>
  <span class="modes"><svg width="67" height="18" viewBox="0 0 67 18"><path d="M0 0h4v5H0zM5 0h4v5H5zM10 0h4v5h-4zM0 6.500h4v5H0zM5 6.500h4v5H5zM10 6.500h4v5h-4zM0 13h4v5H0zM5 13h4v5H5zM10 13h4v5h-4zM26 0h14v11H26zM26 13h4v5h-4zM31 13h4v5h-4zM36 13h4v5h-4z" fill="#b5b5b5"/><path d="M53 0h13v18H53z" fill="#666"/></svg></span>
</div>

<footer class="taskbar">
  <div class="start"><svg width="20" height="20" viewBox="0 0 20 20"><path d="M0 3l8.500-1.300v7.800H0zM9.300 1.500L20 0v9.500H9.300zM0 10.400h8.500v7.900L0 17zM9.300 10.400H20V20L9.300 18.400z" fill="#fff"/></svg></div>
  <div class="search"><svg width="21" height="21" viewBox="0 0 21 21"><circle cx="13" cy="8" r="6.600" fill="none" stroke="#222" stroke-width="1.400"/><path d="M8.300 12.700L.7 20.300" stroke="#222" stroke-width="1.500"/></svg><span>Search</span>
    <svg class="camp" width="74" height="36" viewBox="0 0 74 36"><path d="M1 36c2-8 12-10 22-10 14 0 22-4 50-2v12z" fill="#4d6d1c"/><path d="M1 36c2-5 10-6 18-5l20 5z" fill="#2f4a12"/><circle cx="24" cy="9" r="6.200" fill="#f2b45c"/><circle cx="22" cy="7.500" r="2.500" fill="#f8d08c"/><path d="M28 31l13-20 5-1 13 21-14 2z" fill="#3f8fb5"/><path d="M45 11l14 20-5 1z" fill="#24607f"/><path d="M33 30l9-18 7 19z" fill="#85bbcf"/><path d="M36 30l6-15 5 15z" fill="#e5c067"/><path d="M67 6l-5 8h3l-4 6h3l-5 8h15V8z" fill="#274d25"/><path d="M11 32c-4-9 2-8 5-20 4 6 2 9 6 8 5 7 2 12-2 12z" fill="#f07a1c"/><path d="M14 32c-1-6 3-6 3-11 4 5 4 9 2 11z" fill="#ffd04f"/><path d="M9 33h14" stroke="#6b3d1a" stroke-width="2"/></svg>
  </div>
  <div class="app view-btn"><svg width="20" height="20" viewBox="0 0 22 20" fill="none" stroke="#eee" stroke-width="1.300"><path d="M1 5h12v10H1zM1 0v2h12V0M1 20v-2h12v2M19 0v5M19 12v8"/><path d="M17.500 7h3v2.500h-3z" fill="#eee"/></svg></div>
  <div class="app"><svg width="21" height="21" viewBox="0 0 21 21"><circle cx="10.500" cy="10.500" r="10" fill="#1380d0"/><path d="M.6 9C3-2 20-2 20.500 9c0 4-6 5.500-8.500 4 3-4-1-7-5-6-3 .5-5.500 1-6.400 2z" fill="#43cdb0"/><path d="M7 8c-4 4-1 11 6 11 3 0 4-1 5-2-5 1-9-1-8-6 1-2 0-3-3-3z" fill="#0b4d92"/><path d="M13 2c6 2 8 6 7.500 9-1 2-5 3-8 2 2-3 3-8 .5-11z" fill="#66e08c"/></svg></div>
  <div class="app run"><svg width="20" height="18" viewBox="0 0 20 18"><path d="M0 1h8l2 3h10v13H0z" fill="#e6a117"/><path d="M0 5h20v12H0z" fill="#ffd766"/><path d="M4 17v-7h12v7h-3v-3H7v3z" fill="#3d8fd6"/></svg></div>
  <div class="app"><svg width="20" height="20" viewBox="0 0 20 20"><path d="M0 7l10-7 10 7v12H0z" fill="#0f5ea8"/><path d="M2 6h16v6l-8 5-8-5z" fill="#f2f8fd"/><path d="M0 7l10 7 10-7v12H0z" fill="#31b1ef"/></svg></div>
  <div class="app"><svg width="18" height="19" viewBox="0 0 18 19"><path d="M0 0h18v14H0z" fill="#0f66b8"/><path d="M3 0h9v18H3z" fill="#1fa0e0"/><path d="M4 3h7v8H4z" fill="#43c8f2"/></svg></div>
  <div class="app"><svg width="20" height="19" viewBox="0 0 20 19"><path d="M6 1l11 3 2 10-10-3z" fill="#4aa6ea" stroke="#ccd" stroke-width=".8"/><path d="M0 15l9-3 2 2-8 3zM8 17l7-3 3 2-6 2z" fill="#d5d9dc"/></svg></div>
  <div class="app run"><svg width="20" height="20" viewBox="0 0 20 20"><circle cx="10" cy="10" r="10" fill="#2fa84f"/><path d="M1.300 5A10 10 0 0118.700 5L10 5.500 5.500 12z" fill="#e33b2e"/><path d="M18.700 5A10 10 0 0110 20l4.500-8L14 5.500z" fill="#fcc81d"/><path d="M1.300 5l4.500 8 4 1.500L10 6h8.900" fill="#e33b2e"/><circle cx="10" cy="10" r="4.900" fill="#fff"/><circle cx="10" cy="10" r="3.900" fill="#3b7de8"/></svg></div>
  <div class="app on"><svg width="20" height="20"><use href="#tableau"/></svg></div>
  <div class="tray">
    <svg width="29" height="30" viewBox="0 0 29 30"><defs><linearGradient id="sun" x1="0" y1="0" x2=".6" y2="1"><stop offset="0" stop-color="#f6c035"/><stop offset="1" stop-color="#f0660f"/></linearGradient></defs><circle cx="13" cy="16" r="12.500" fill="url(#sun)"/><circle cx="24.500" cy="4" r="3.600" fill="#d0281e"/></svg>
    <span class="temp">33°C&nbsp; Sunny</span>
    <svg width="17" height="10" viewBox="0 0 17 10"><path d="M1 9l7.500-8L16 9" fill="none" stroke="#eee" stroke-width="1.500"/></svg>
    <svg class="cam" width="15" height="20" viewBox="0 0 15 20" fill="none" stroke="#eee" stroke-width="1.300"><rect x="1" y="5" width="9" height="10" rx="2"/><path d="M10 9l3.500-2v7L10 12M3 2.500c2-2 5-2 7 0M3 17.500c2 2 5 2 7 0"/></svg>
    <svg width="20" height="17" viewBox="0 0 20 17"><path d="M1 2.500h15v10H1z" fill="none" stroke="#eee" stroke-width="1.300"/><path d="M3 4.500h5v6H3z" fill="#eee"/><circle cx="14" cy="11" r="5.200" fill="#0c8f26"/><path d="M14 8l2 3-2 3-2-3z" fill="none" stroke="#fff"/></svg>
    <svg width="22" height="16" viewBox="0 0 22 16" fill="none" stroke="#eee" stroke-width="1.300"><path d="M1 5.500h3l4-4v13l-4-4H1zM11 5c1.500 2 1.500 4 0 6M14 3c3 3 3 7 0 10M17 1c4.500 4 4.500 10 0 14"/></svg>
    <svg width="17" height="16" viewBox="0 0 17 16" fill="none" stroke="#ddd" stroke-width="1.300"><path d="M1 15C1 6 7 1 16 1M5 15C5 9 9 5 16 5M9 15c0-3 2-6 7-6"/><circle cx="14.500" cy="13.500" r="1.500" fill="#eee" stroke="none"/></svg>
    <span class="lang">ENG</span><span class="clock">16:46</span>
    <svg width="20" height="21" viewBox="0 0 20 21"><path d="M1 1h18v15.500h-5L11 20l-1-3.500H1z" fill="none" stroke="#eee" stroke-width="1.400"/></svg>
    <i class="peek"></i>
  </div>
</footer>
</body>
</html>
```
FILE: styles.css
```css
* { box-sizing: border-box; }
body { margin: 0; width: 1920px; height: 1080px; overflow: hidden; display: flex; flex-direction: column; background: #fff; font-family: "Open Sans", "Noto Sans", sans-serif; color: #000; }
h2, h3, ul { margin: 0; padding: 0; font-size: inherit; }
svg { display: block; flex: none; overflow: visible; }
.defs { position: absolute; }

.titlebar { height: 28px; display: flex; align-items: center; padding: 0 20px 1px 3px; font-size: 15px; letter-spacing: -.4px; }
.app-icon { margin-right: 6px; }
.win-buttons { margin: 0 3px 0 auto; }
.menubar { height: 28px; display: flex; align-items: center; gap: 20.500px; padding: 0 0 0 10px; font-size: 15px; letter-spacing: -.5px; }

.toolbar { height: 51px; background: #f4f4f4; display: grid; align-items: center; padding-left: 20px; color: #666;
  grid-template-columns: 39px 17px 40px 36px 36px 19px 40px 39px 32px 16px 34px 18px 14px 34px 20px 37px 34px 19px 17px 40px 40px 40px 21px 27px 22px 28px 21px 42px 38px 149px 16px 31px 21px 39px 20px 589px 45px 27px auto; }
.sep { width: 1px; height: 44px; background: #ccc; }
.off { color: #bbb; }
.off2 { color: #999; }
.fit-select { width: 130px; height: 28px; border: 1px solid #d4d4d4; display: flex; align-items: center; justify-content: flex-end; padding-right: 7px; }
.show-me { font: 300 15.300px Inter, sans-serif; color: #555; }

.workspace { height: 871px; display: flex; }
.pane { width: 263px; background: #fafafa; border-right: 2px solid #d3d3d3; font: 300 15px Inter, sans-serif; font-feature-settings: "calt" 0; color: #222; display: flex; flex-direction: column; }
.pane h2 { font-size: 16px; font-weight: 600; }
.pane-tabs { height: 33px; display: flex; border-top: 1px solid #ccc; font-size: 16px; line-height: 31px; }
.pane-tabs b { width: 115px; padding-left: 23px; font-weight: 600; color: #000; }
.pane-tabs span { flex: 1; background: #fff; border: solid #ccc; border-width: 0 0 1px 1px; padding: 0 9px 0 16px; display: flex; justify-content: space-between; align-items: center; }
.new-point { height: 103px; padding: 22px 23px 0; border-bottom: 1px solid #ccc; }
.btns { display: flex; gap: 15px; margin-top: 16px; }
.btns button { width: 101px; height: 29px; border: 1px solid #ccc; border-bottom-width: 2px; background: #fff; font: inherit; color: #222; padding: 0; }
.sheets { height: 457px; padding-top: 25px; list-style: none; font-size: 16px; border-bottom: 2px solid #ccc; }
.sheets li { height: 25px; display: flex; align-items: center; padding-left: 25px; gap: 9px; }
.sheets .d { margin: -2px 4px 0 0; }
.sheets .hover { background: #f3f3f3; }
.drag { height: 96px; padding: 23px 0 0 26px; display: flex; gap: 15px; line-height: 18px; border-bottom: 1px solid #ccc; }
.title-opt { height: 59px; display: flex; align-items: center; gap: 7px; padding: 1px 0 0 23px; border-bottom: 2px solid #ccc; }
.size { padding: 24px 22px 0 23px; }
.size-select { margin-top: 15px; height: 30px; border-bottom: 2px solid #d0d0d0; display: flex; align-items: center; justify-content: space-between; padding: 0 0 1px 1px; }
.size-select svg { color: #666; }

.story { width: 1270px; background: #fff; display: flex; flex-direction: column; }
.navigator { height: 125px; padding-top: 2px; display: flex; }
.arrow { margin-top: 28px; }
.points { width: 1174px; display: flex; gap: 2px; }
.point { flex: none; width: 188px; height: 88px; background: #ececec; padding: 13px 0 0 13px; font: 300 15.200px/21px "Noto Sans", sans-serif; color: #555; white-space: nowrap; }
.cut { width: 34px; padding-left: 0; text-indent: -5px; overflow: hidden; }
.current { background: #dadada; color: #000; }
.view { display: flex; padding-left: 20px; flex: 1; }
.frame { width: 1029px; border: 1px solid #e2e2e2; border-bottom: 0; padding: 112px 0 0 138px; }
.map { overflow: hidden; }
.land { fill: #c2e4d9; stroke: #6a6a6a; stroke-width: 3; stroke-linejoin: round; }
.land path:not([d*="z"]) { fill: none; }
.land .bare { fill: #f2ece8; stroke: none; }
.land .isl { fill: none; stroke-width: 3.500; }
.ice { fill: #c6e6dc; }
.rus { fill: #517c97; }
.labels { font: 400 15px "Noto Sans", sans-serif; fill: #262a2c; text-anchor: middle; }
.labels .s { text-anchor: start; }
.labels .e { text-anchor: end; }
.legend { padding: 4px 0 0 6px; color: #333; }
.legend h3 { font: 500 15px/22px "Noto Sans", sans-serif; white-space: nowrap; }
.ramp { display: flex; align-items: center; gap: 5px; margin-top: 5px; padding-left: 4px; font: 300 15.500px/22px "Noto Sans", sans-serif; }
.ramp i { width: 133px; height: 22px; border: 1px solid #aaa594; border-width: 2px 1px; background: linear-gradient(90deg, #c3e8da, #48a4bf 52%, #345d8a); }
.void { flex: 1; background: #f4f4f4; }
.scroll { width: 20px; background: #f0f0f0; border-left: 1px solid #fff; display: flex; flex-direction: column; align-items: center; padding: 6px 0; }
.scroll i { width: 19px; height: 597px; margin: 50px 0 194px; background: #cdcdcd; }

.sheet-tabs { height: 39px; background: #e6e6e6; border-bottom: 2px solid #d0d0d0; display: grid; grid-template-columns: 164px 75px 110px 135px 108px 109px 85px 87px 127px 129px 130px 90px 39px 39px 40px; font: 300 15px Inter, sans-serif; color: #333; }
.sheet-tabs span { display: flex; align-items: center; justify-content: center; gap: 4px; padding: 1px 3px 0 0; border-right: 1px solid #c8c8c8; white-space: nowrap; letter-spacing: -.15px; }
.sheet-tabs .ds { justify-content: flex-start; padding-left: 12px; gap: 6px; letter-spacing: 0; }
.sheet-tabs .active { background: #fafafa; font-weight: 600; letter-spacing: -.5px; }
.sheet-tabs .add { padding: 2px 0 0 1px; }
.status { height: 25px; background: #ebebeb; display: grid; grid-template-columns: 158px 34px 34px 59px 88px 85px; justify-content: end; font-size: 14.500px; letter-spacing: -.4px; }
.status span { border-left: 1px solid #c8c8c8; display: flex; align-items: center; }
.user { padding: 0 0 2px 7px; gap: 10px; white-space: nowrap; }
.pager { justify-content: center; }
.modes { justify-content: flex-end; padding-right: 6px; }

.taskbar { height: 38px; display: flex; color: #f2f2f2; background: linear-gradient(90deg, #22303a 0, #22303a 20%, #2a3a3c 25%, #38412e 34%, #34362a 45%, #2a2b22 55%, #2e3a2e 62%, #252820 66%, #33261f 69%, #2a2820 73%, #34231f 76%, #452626 80%, #372320 84%, #2b211f 92%, #211f1e 100%); }
.start { width: 45px; background: #36373b; display: flex; align-items: center; justify-content: center; }
.search { width: 323px; background: #f1f1f1; border: 1px solid #bbb; border-left: 0; display: flex; align-items: center; padding-left: 15px; gap: 14px; font-size: 18px; color: #222; }
.camp { margin-left: auto; }
.app { width: 46px; padding: 0 0 1px 1px; display: flex; align-items: center; justify-content: center; }
.view-btn { width: 48px; padding-right: 4px; }
.run { background: linear-gradient(90deg, transparent 6px, #feb5af 6px, #feb5af 30px, #c9908c 30px, #c9908c 41px, transparent 41px) bottom / 100% 3px no-repeat; }
.on { background: linear-gradient(#feb5af, #feb5af) bottom / 100% 3px no-repeat #646a5e; }
.tray { margin-left: auto; display: flex; align-items: center; letter-spacing: -.3px; }
.temp { width: 127px; padding-left: 8px; font-size: 17px; white-space: nowrap; }
.tray svg + svg { margin-left: 11px; }
.tray .cam { margin-left: 15px; }
.lang { font-size: 15px; margin: 0 17px 0 14px; letter-spacing: -.8px; }
.clock { font-size: 15px; margin-right: 23px; letter-spacing: -.7px; }
.peek { width: 1px; height: 38px; margin: 0 5px 0 25px; background: #777; }
```
